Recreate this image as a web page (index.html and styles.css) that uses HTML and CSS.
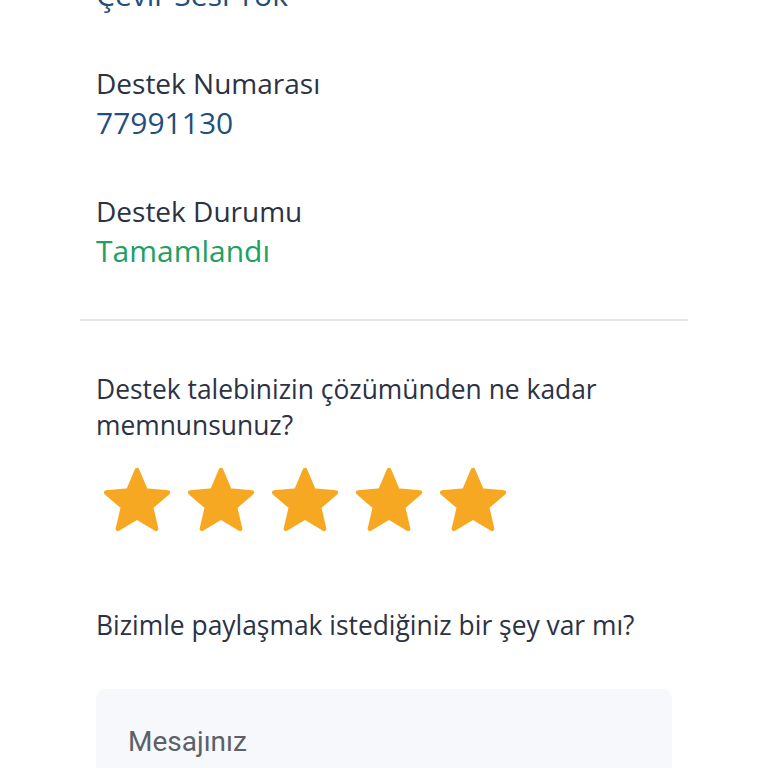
FILE: index.html
```html
<!DOCTYPE html>
<html lang="tr">
<head>
  <meta charset="UTF-8" />
  <meta name="viewport" content="width=device-width, initial-scale=1.0"/>
  <title>Destek Talebi</title>
  <link rel="stylesheet" href="styles.css">
</head>
<body>
  <div class="page">
    <div class="info">
      <div class="field">
        <span class="label">Destek Konusu</span>
        <span class="value">Çevir Sesi Yok</span>
      </div>
      <div class="field">
        <span class="label">Destek Numarası</span>
        <span class="value">77991130</span>
      </div>
      <div class="field">
        <span class="label">Destek Durumu</span>
        <span class="value done">Tamamlandı</span>
      </div>
    </div>

    <hr class="divider">

    <div class="rating">
      <p class="question">Destek talebinizin çözümünden ne kadar memnunsunuz?</p>
      <div class="stars">
        <svg class="star" viewBox="0 0 24 24"><path d="M12 17.27L18.18 21l-1.64-7.03L22 9.24l-7.19-.61L12 2 9.19 8.63 2 9.24l5.46 4.73L5.82 21z"/></svg>
        <svg class="star" viewBox="0 0 24 24"><path d="M12 17.27L18.18 21l-1.64-7.03L22 9.24l-7.19-.61L12 2 9.19 8.63 2 9.24l5.46 4.73L5.82 21z"/></svg>
        <svg class="star" viewBox="0 0 24 24"><path d="M12 17.27L18.18 21l-1.64-7.03L22 9.24l-7.19-.61L12 2 9.19 8.63 2 9.24l5.46 4.73L5.82 21z"/></svg>
        <svg class="star" viewBox="0 0 24 24"><path d="M12 17.27L18.18 21l-1.64-7.03L22 9.24l-7.19-.61L12 2 9.19 8.63 2 9.24l5.46 4.73L5.82 21z"/></svg>
        <svg class="star" viewBox="0 0 24 24"><path d="M12 17.27L18.18 21l-1.64-7.03L22 9.24l-7.19-.61L12 2 9.19 8.63 2 9.24l5.46 4.73L5.82 21z"/></svg>
      </div>
      <p class="question share">Bizimle paylaşmak istediğiniz bir şey var mı?</p>
      <textarea class="message" placeholder="Mesajınız"></textarea>
    </div>
  </div>
</body>
</html>
```

FILE: styles.css
```css
body {
  margin: 0;
  background: #ffffff;
  font-family: 'Open Sans', sans-serif;
  color: #2c3243;
  overflow: hidden;
}

.page {
  margin: -65px 80px 0;
}

.info {
  padding: 0 16px;
  display: flex;
  flex-direction: column;
  gap: 48px;
}

.field {
  display: flex;
  flex-direction: column;
  line-height: 40px;
}

.label {
  font-size: 28px;
  color: #2c3243;
}

.value {
  font-size: 30px;
  color: #1f4f7c;
}

.value.done {
  color: #21a062;
}

.divider {
  border: none;
  border-top: 2px solid #e7e7e7;
  margin: 48px 0 0;
}

.rating {
  padding: 0 16px;
}

.question {
  margin: 50px 0 0;
  font-size: 26.4px;
  line-height: 36px;
  color: #2c3243;
}

.stars {
  display: flex;
  gap: 10px;
  margin: 21px 0 0 4px;
}

.star {
  width: 74px;
  height: 74px;
  fill: #f7a823;
  stroke: #f7a823;
  stroke-width: 1.5;
  stroke-linejoin: round;
}

.question.share {
  margin-top: 69px;
}

.message {
  display: block;
  box-sizing: border-box;
  width: 576px;
  height: 200px;
  margin-top: 46px;
  padding: 36px 32px;
  border: none;
  border-radius: 10px;
  background: #f6f8fb;
  font-family: Roboto, sans-serif;
  font-size: 28px;
  resize: none;
}

.message::placeholder {
  color: #5c6068;
}
```
